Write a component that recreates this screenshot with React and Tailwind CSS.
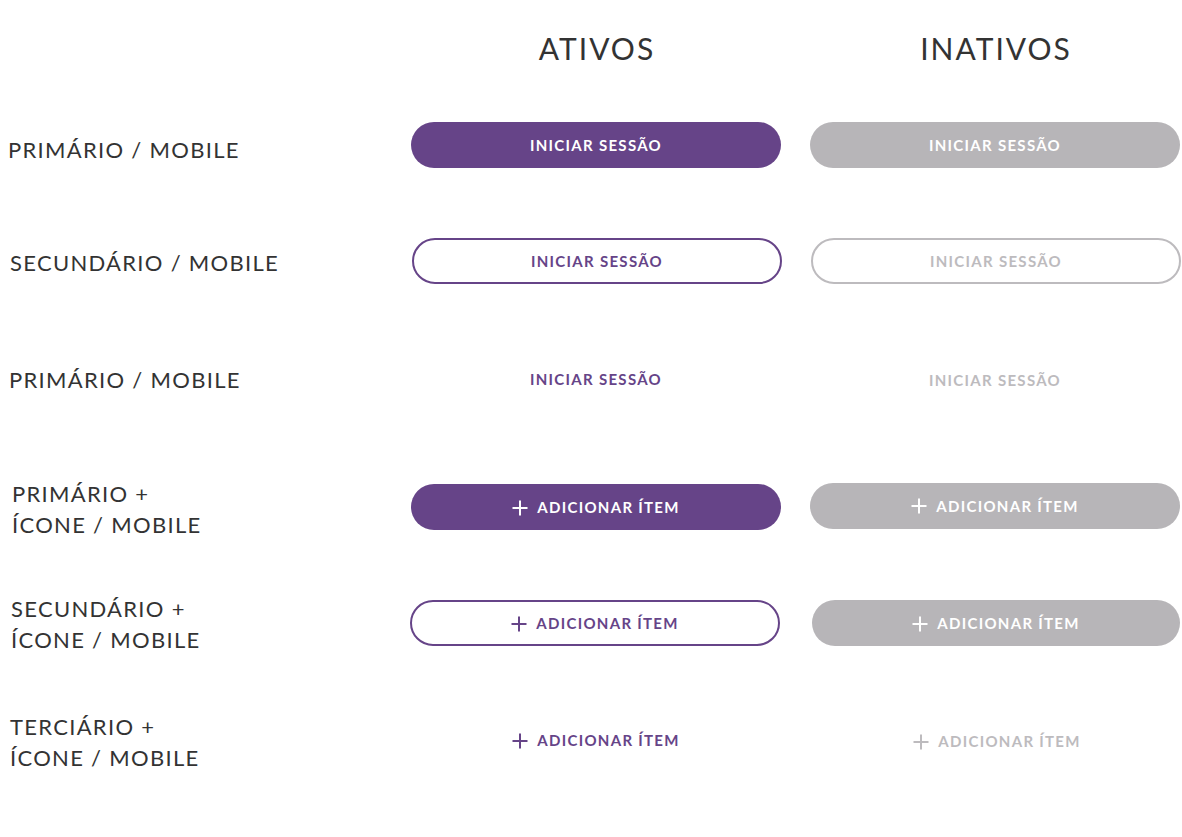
const Plus = () => (
  <svg
    width="16"
    height="16"
    viewBox="0 0 16 16"
    fill="none"
    stroke="currentColor"
    strokeWidth="2"
    strokeLinecap="square"
  >
    <path d="M8 1.5v13M1.5 8h13" />
  </svg>
);

const Btn = ({ variant, active, icon, text, narrow }) => {
  let look = "";
  if (variant === "primary") {
    look = active ? "bg-[#664488] text-white" : "bg-[#b7b5b8] text-white";
  } else if (variant === "secondary") {
    look = active
      ? "border-2 border-[#664488] bg-white text-[#664488]"
      : "border-2 border-[#bdbbbe] bg-white text-[#bdbbbe]";
  } else if (variant === "secondaryFilled") {
    look = "bg-[#b7b5b8] text-white";
  } else {
    look = active ? "text-[#664488]" : "text-[#bdbbbe]";
  }

  return (
    <div
      className={`flex h-[46px] items-center justify-center gap-[9px] rounded-full pt-[1px] ${narrow ? "w-[368px]" : "w-[370px]"} ${look}`}
    >
      {icon && <Plus />}
      <span className="font-['Lato',sans-serif] text-[15px] font-bold tracking-[1.3px]">
        {text}
      </span>
    </div>
  );
};

const Label = ({ lines, className = "" }) => (
  <div
    className={`w-[400px] font-['Lato',sans-serif] text-[22px] leading-[31px] tracking-[1.3px] text-[#333333] ${className}`}
  >
    {lines.map((l, i) => (
      <div key={i}>{l}</div>
    ))}
  </div>
);

const Row = ({ label, labelClass, children, className = "" }) => (
  <div className={`flex h-[46px] items-center ${className}`}>
    <Label lines={label} className={labelClass} />
    {children}
  </div>
);

export default function App() {
  return (
    <div className="h-[837px] w-[1182px] overflow-hidden bg-white">
      {/* headers */}
      <div className="mt-[30px] flex h-[36px] font-['Lato',sans-serif] text-[30px] leading-[36px] tracking-[2px] text-[#333333]">
        <div className="w-[400px]" />
        <div className="w-[400px] pl-[12px]">
          <div className="w-[370px] text-center">ATIVOS</div>
        </div>
        <div className="w-[382px] pl-[11px]">
          <div className="w-[370px] text-center">INATIVOS</div>
        </div>
      </div>

      <Row
        className="mt-[56px]"
        label={["PRIMÁRIO / MOBILE"]}
        labelClass="pl-[8px] pt-[8px]"
      >
        <div className="w-[400px] pl-[11px]">
          <Btn variant="primary" active text="INICIAR SESSÃO" />
        </div>
        <div className="pl-[10px]">
          <Btn variant="primary" text="INICIAR SESSÃO" />
        </div>
      </Row>

      <Row
        className="mt-[70px]"
        label={["SECUNDÁRIO / MOBILE"]}
        labelClass="pl-[10px] pt-[3px]"
      >
        <div className="w-[400px] pl-[12px]">
          <Btn variant="secondary" active text="INICIAR SESSÃO" />
        </div>
        <div className="pl-[11px]">
          <Btn variant="secondary" text="INICIAR SESSÃO" />
        </div>
      </Row>

      <Row
        className="mt-[72px]"
        label={["PRIMÁRIO / MOBILE"]}
        labelClass="pl-[9px] pt-[1px]"
      >
        <div className="w-[400px] pl-[11px]">
          <Btn variant="text" active text="INICIAR SESSÃO" />
        </div>
        <div className="pl-[10px] pt-[2px]">
          <Btn variant="text" text="INICIAR SESSÃO" />
        </div>
      </Row>

      <Row
        className="mt-[82px]"
        label={["PRIMÁRIO +", "ÍCONE / MOBILE"]}
        labelClass="pl-[12px] pt-[4px]"
      >
        <div className="w-[400px] pl-[11px]">
          <Btn variant="primary" active icon text="ADICIONAR ÍTEM" />
        </div>
        <div className="pl-[10px] pb-[3px]">
          <Btn variant="primary" icon text="ADICIONAR ÍTEM" />
        </div>
      </Row>

      <Row
        className="mt-[70px]"
        label={["SECUNDÁRIO +", "ÍCONE / MOBILE"]}
        labelClass="pl-[11px] pt-[1px]"
      >
        <div className="w-[400px] pl-[10px]">
          <Btn variant="secondary" active icon text="ADICIONAR ÍTEM" />
        </div>
        <div className="pl-[12px]">
          <Btn variant="secondaryFilled" narrow icon text="ADICIONAR ÍTEM" />
        </div>
      </Row>

      <Row
        className="mt-[71px]"
        label={["TERCIÁRIO +", "ÍCONE / MOBILE"]}
        labelClass="pl-[10px] pt-[4px]"
      >
        <div className="w-[400px] pl-[11px]">
          <Btn variant="text" active icon text="ADICIONAR ÍTEM" />
        </div>
        <div className="pl-[12px] pt-[2px]">
          <Btn variant="text" icon text="ADICIONAR ÍTEM" />
        </div>
      </Row>
    </div>
  );
}
